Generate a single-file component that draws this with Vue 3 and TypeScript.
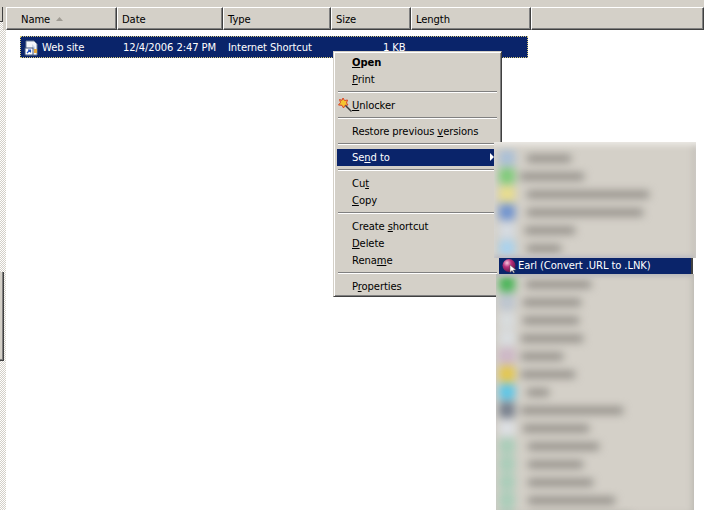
<script setup lang="ts">
const columns = [
  { label: 'Name', width: 111, sort: true },
  { label: 'Date', width: 106 },
  { label: 'Type', width: 108 },
  { label: 'Size', width: 80 },
  { label: 'Length', width: 120 },
]
const upperRows = [
  { color: '#a9bfd6', width: 44, indent: 30 },
  { color: '#7ecb78', width: 64, indent: 23 },
  { color: '#e8dd8c', width: 122, indent: 30 },
  { color: '#6f93cf', width: 116, indent: 30 },
  { color: '#d5dbe2', width: 50, indent: 28 },
  { color: '#a9d2ee', width: 34, indent: 30 },
]
const lowerRows = [
  { color: '#49b457', width: 65, indent: 29 },
  { color: '#bcc5d0', width: 58, indent: 26 },
  { color: '#d8dcde', width: 56, indent: 26 },
  { color: '#d9dde0', width: 62, indent: 24 },
  { color: '#cdb6c6', width: 42, indent: 24 },
  { color: '#e3c64d', width: 54, indent: 24 },
  { color: '#5cc5e6', width: 22, indent: 30 },
  { color: '#77808e', width: 102, indent: 24 },
  { color: '#dde0e4', width: 66, indent: 26 },
  { color: '#a9cdb9', width: 71, indent: 31 },
  { color: '#a9cdb9', width: 55, indent: 31 },
  { color: '#a9cdb9', width: 65, indent: 31 },
  { color: '#a9cdb9', width: 87, indent: 31 },
  { color: '#a9cdb9', width: 103, indent: 31 },
]
</script>

<template>
  <div class="window">
    <div class="top-strip"></div>
    <div class="header">
      <div class="stub"><i class="stub-thumb"></i><i class="stub-track"></i></div>
      <div v-for="c in columns" :key="c.label" class="col" :style="{ width: c.width + 'px' }">
        {{ c.label }}
        <svg v-if="c.sort" class="sort" width="7" height="4" viewBox="0 0 7 4"><path d="M3.5 0L7 4H0z" fill="#a09c94" /></svg>
      </div>
      <div class="col fill"></div>
    </div>
    <div class="list">
      <div class="scroll-edge"><i class="thumb"></i></div>
      <div class="row">
        <svg class="file" width="16" height="16" viewBox="0 0 16 16">
          <path d="M3 1h8l3 3v11H3z" fill="#f4f6fa" stroke="#6f7f96" />
          <path d="M9 4l3 3v3H9z" fill="#cfd8e6" />
          <rect x="2" y="8" width="8" height="7" fill="#fff" stroke="#40547c" />
          <path d="M4 13l3-3M5 10h2.500v2.500" stroke="#1f4fbf" stroke-width="1.200" fill="none" />
          <path d="M11 9h3v4h-3z" fill="#e6a93c" />
        </svg>
        <span class="name">Web site</span>
        <span class="date">12/4/2006 2:47 PM</span>
        <span class="type">Internet Shortcut</span>
        <span class="size">1 KB</span>
      </div>
    </div>

    <div class="menu">
      <div class="item strong"><span><u>O</u>pen</span></div>
      <div class="item"><span><u>P</u>rint</span></div>
      <div class="sep"></div>
      <div class="item">
        <svg class="wand" width="16" height="16" viewBox="0 0 16 16">
          <path d="M6 1l1.500 2.500L10.500 3 9.500 6 11 8 8 8.300 6.500 11 5 8.300 1.500 8 3.500 5.500 2.500 2.500 5 3.300z" fill="#f4c430" stroke="#d8452a" stroke-width="1" />
          <path d="M8.500 8.500L14.500 14.500" stroke="#3d3d3d" stroke-width="1.500" />
        </svg>
        <span><u>U</u>nlocker</span>
      </div>
      <div class="sep"></div>
      <div class="item"><span>Restore previous <u>v</u>ersions</span></div>
      <div class="sep"></div>
      <div class="item active"><span>Se<u>n</u>d to</span><i class="arrow"></i></div>
      <div class="sep"></div>
      <div class="item"><span>Cu<u>t</u></span></div>
      <div class="item"><span><u>C</u>opy</span></div>
      <div class="sep"></div>
      <div class="item"><span>Create <u>s</u>hortcut</span></div>
      <div class="item"><span><u>D</u>elete</span></div>
      <div class="item"><span>Rena<u>m</u>e</span></div>
      <div class="sep"></div>
      <div class="item"><span>P<u>r</u>operties</span></div>
    </div>

    <div class="sub upper">
      <div class="blur-layer">
        <div v-for="(r, i) in upperRows" :key="i" class="blur-row">
          <i class="blob" :style="{ background: r.color }"></i>
          <b class="bar" :style="{ width: r.width + 'px', marginLeft: r.indent - 18 + 'px' }"></b>
        </div>
      </div>
    </div>
    <div class="sub lower">
      <div class="blur-layer">
        <div v-for="(r, i) in lowerRows" :key="i" class="blur-row">
          <i class="blob" :style="{ background: r.color }"></i>
          <b class="bar" :style="{ width: r.width + 'px', marginLeft: r.indent - 18 + 'px' }"></b>
        </div>
      </div>
    </div>
    <div class="earl">
      <svg class="ball" width="16" height="16" viewBox="0 0 16 16">
        <defs>
          <radialGradient id="ballFill" cx="0.350" cy="0.300" r="0.800">
            <stop offset="0" stop-color="#f6c6de" />
            <stop offset="0.400" stop-color="#b8307c" />
            <stop offset="1" stop-color="#561040" />
          </radialGradient>
        </defs>
        <circle cx="7" cy="7.500" r="6.500" fill="url(#ballFill)" />
        <path d="M8 7v7.500l2-2 1.500 2.500 1-.5-1.300-2.500H14z" fill="#fff" stroke="#555" stroke-width="0.500" />
      </svg>
      <span>Earl (Convert .URL to .LNK)</span>
    </div>
  </div>
</template>

<style>
html, body { margin: 0; background: #fff; }
</style>

<style scoped>
.window {
  position: relative;
  width: 704px;
  height: 510px;
  overflow: hidden;
  background: #fff;
  font-family: Tahoma, "DejaVu Sans", sans-serif;
  font-size: 10px;
  letter-spacing: -0.1px;
  color: #000;
}
.top-strip { height: 7px; background: #d4d0c8; }
.header { display: flex; height: 23px; background: #d4d0c8; box-sizing: border-box; }
.stub { width: 6px; flex: none; display: flex; flex-direction: column; }
.stub-thumb {
  display: block;
  width: 3px;
  height: 15px;
  box-sizing: border-box;
  background: #d4d0c8;
  border-right: 1px solid #404040;
  border-bottom: 1px solid #404040;
}
.stub-track {
  display: block;
  width: 3px;
  flex: 1;
  background-image: repeating-conic-gradient(#d4d0c8 0 25%, #fff 0 50%);
  background-size: 2px 2px;
}
.col {
  box-sizing: border-box;
  padding: 5px 0 0 14px;
  border-top: 1px solid #fff;
  border-left: 1px solid #fff;
  border-right: 1px solid #404040;
  border-bottom: 1px solid #404040;
  box-shadow: inset -1px -1px #808080;
  line-height: 14px;
  white-space: nowrap;
}
.col + .col { padding-left: 4px; }
.col.fill { flex: 1; }
.sort { margin-left: 3px; vertical-align: 2px; }
.list { position: relative; height: 480px; display: flex; align-items: flex-start; }
.scroll-edge {
  position: absolute;
  left: 0;
  top: 0;
  bottom: 0;
  width: 6px;
  background-image: repeating-conic-gradient(#d4d0c8 0 25%, #fff 0 50%);
  background-size: 2px 2px;
}
.thumb {
  position: absolute;
  left: 0;
  top: 242px;
  width: 3px;
  height: 88px;
  background: #d4d0c8;
  border-right: 1px solid #404040;
  border-bottom: 1px solid #404040;
  box-shadow: inset -1px -1px #808080;
}
.row {
  position: relative;
  margin: 6px 0 0 20px;
  width: 508px;
  height: 22px;
  box-sizing: border-box;
  padding-top: 1px;
  background: #0a246a;
  outline: 1px dotted #d6c87a;
  outline-offset: -1px;
  color: #fff;
  display: flex;
  align-items: center;
  line-height: 14px;
  white-space: nowrap;
}
.file { margin-left: 3px; flex: none; }
.name { margin-left: 3px; width: 81px; }
.date { width: 105px; }
.type { width: 155px; }
.menu {
  position: absolute;
  left: 333px;
  top: 51px;
  width: 169px;
  box-sizing: border-box;
  padding: 2px 3px 1px;
  background: #d4d0c8;
  border-top: 1px solid #d4d0c8;
  border-left: 1px solid #d4d0c8;
  border-right: 1px solid #404040;
  border-bottom: 1px solid #404040;
  box-shadow: inset 1px 1px #fff, inset -1px -1px #808080;
}
.item {
  height: 17px;
  box-sizing: border-box;
  padding-left: 15px;
  display: flex;
  align-items: center;
  position: relative;
  line-height: 14px;
  white-space: nowrap;
}
.item.strong { font-weight: bold; }
.item.active { background: #0a246a; color: #fff; }
.wand { position: absolute; left: 0; top: 0; }
.arrow {
  position: absolute;
  right: 4px;
  top: 4px;
  border-left: 4px solid #fff;
  border-top: 4px solid transparent;
  border-bottom: 4px solid transparent;
}
.sep { height: 2px; margin: 3px 1px 4px; background: #808080; border-bottom: 1px solid #fff; box-sizing: border-box; }
.sub {
  position: absolute;
  background: #d4d0c8;
  overflow: hidden;
}
.upper {
  left: 494px;
  top: 142px;
  width: 202px;
  height: 116px;
}
.upper::after {
  content: "";
  position: absolute;
  inset: 0;
  box-shadow: inset 0 6px 6px -3px #eeece8, inset -6px 0 6px -3px #c2bfb8, inset 0 -5px 5px -3px #b9b9c4;
}
.lower {
  left: 496px;
  top: 274px;
  width: 198px;
  height: 236px;
}
.lower::after {
  content: "";
  position: absolute;
  inset: 0;
  box-shadow: inset -5px 0 6px -3px #bdbab3, inset 0 5px 5px -3px #b4b4bc;
}
.blur-layer { filter: blur(4px); padding-top: 7px; }
.upper .blur-layer { padding-left: 5px; }
.lower .blur-layer { padding-top: 1px; padding-left: 3px; }
.blur-row { height: 18px; display: flex; align-items: center; }
.blob { width: 16px; height: 16px; border-radius: 3px; flex: none; }
.bar { height: 7px; background: #8e8a84; flex: none; }
.earl {
  position: absolute;
  left: 499px;
  top: 258px;
  width: 192px;
  height: 16px;
  background: #0a246a;
  color: #fff;
  display: flex;
  align-items: center;
  line-height: 14px;
  white-space: nowrap;
  box-shadow: -2px 0 #d4d0c8, 2px 0 #404040;
}
.ball { margin: 0 0 0 3px; flex: none; }
</style>
